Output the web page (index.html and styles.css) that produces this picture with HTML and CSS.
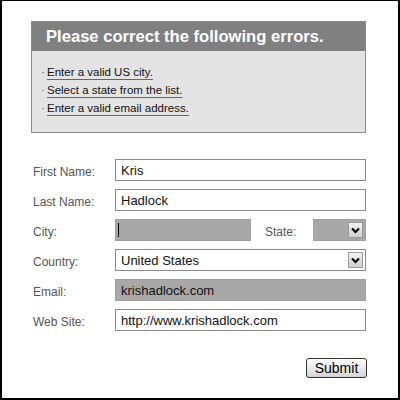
FILE: index.html
```html
<!DOCTYPE html>
<html lang="en">
<head>
    <meta charset="UTF-8">
    <title>Registration</title>
    <link rel="stylesheet" href="styles.css">
</head>
<body>
    <div class="frame">
        <div class="error-box">
            <h1 class="error-heading">Please correct the following errors.</h1>
            <ul class="error-list">
                <li><a href="#city">Enter a valid US city.</a></li>
                <li><a href="#state">Select a state from the list.</a></li>
                <li><a href="#email">Enter a valid email address.</a></li>
            </ul>
        </div>

        <form class="reg-form">
            <label class="form-label" for="first">First Name:</label>
            <input class="field" id="first" type="text" value="Kris">

            <label class="form-label" for="last">Last Name:</label>
            <input class="field" id="last" type="text" value="Hadlock">

            <label class="form-label" for="city">City:</label>
            <div class="city-row">
                <div class="field field-error city-field" id="city"><span class="caret"></span></div>
                <label class="form-label state-label" for="state">State:</label>
                <div class="select select-error state-select" id="state">
                    <span class="select-text"></span>
                    <span class="select-btn">
                        <svg width="9" height="7" viewBox="0 0 9 7"><path d="M1 1.5 L4.5 5 L8 1.5" fill="none" stroke="#000" stroke-width="2.2"/></svg>
                    </span>
                </div>
            </div>

            <label class="form-label" for="country">Country:</label>
            <div class="select" id="country">
                <span class="select-text">United States</span>
                <span class="select-btn">
                    <svg width="9" height="7" viewBox="0 0 9 7"><path d="M1 1.5 L4.5 5 L8 1.5" fill="none" stroke="#000" stroke-width="2.2"/></svg>
                </span>
            </div>

            <label class="form-label" for="email">Email:</label>
            <input class="field field-error" id="email" type="text" value="krishadlock.com">

            <label class="form-label" for="site">Web Site:</label>
            <input class="field" id="site" type="text" value="http://www.krishadlock.com">

            <div class="actions">
                <button type="submit" class="submit-btn">Submit</button>
            </div>
        </form>
    </div>
</body>
</html>
```

FILE: styles.css
```css
body {
    margin: 0;
    padding: 0;
    background: #ffffff;
    font-family: 'Liberation Sans', Arial, sans-serif;
}

.frame {
    width: 400px;
    height: 400px;
    box-sizing: border-box;
    border: 2px solid #000;
    border-top-width: 1px;
    padding: 20px 32px 0 29px;
}

.error-box {
    background: #e4e4e4;
    border: 1px solid #8a8a8a;
    height: 112px;
    box-sizing: border-box;
}

.error-heading {
    margin: 0;
    height: 29px;
    background: #808080;
    color: #ffffff;
    font-size: 16.6px;
    font-weight: bold;
    line-height: 29px;
    padding-left: 14px;
}

.error-list {
    list-style: none;
    margin: 0;
    padding: 12px 0 0 9px;
}

.error-list li {
    font-size: 11.5px;
    line-height: 18px;
    color: #555;
}

.error-list li::before {
    content: '\00B7';
    display: inline-block;
    width: 6px;
    color: #666;
}

.error-list a {
    color: #111;
    text-decoration: underline;
    text-decoration-color: #666;
    text-decoration-thickness: 1px;
    text-underline-offset: 3px;
}

.reg-form {
    display: grid;
    grid-template-columns: 82px 1fr;
    grid-auto-rows: 22px;
    row-gap: 8px;
    margin: 26px 0 0 2px;
    align-items: center;
}

.form-label {
    font-size: 12px;
    color: #555;
    padding-top: 3px;
}

.field {
    height: 22px;
    box-sizing: border-box;
    border: 1px solid #8a8a8a;
    background: #fff;
    font-family: 'Liberation Sans', Arial, sans-serif;
    font-size: 13px;
    color: #111;
    padding: 0 5px;
    margin: 0;
    outline: none;
}

.field-error {
    background: #a8a8a8;
    border-color: #a0a0a0;
}

.city-row {
    display: flex;
    align-items: center;
    height: 22px;
}

.city-field {
    width: 136px;
    position: relative;
}

.caret {
    position: absolute;
    left: 2px;
    top: 3px;
    width: 1px;
    height: 14px;
    background: #000;
}

.state-label {
    margin-left: 14px;
    width: 48px;
}

.select {
    height: 22px;
    box-sizing: border-box;
    border: 1px solid #8a8a8a;
    background: #fff;
    display: flex;
    align-items: center;
    justify-content: space-between;
    padding: 0 2px 0 5px;
    font-size: 13px;
    color: #111;
}

.select-error {
    background: #a8a8a8;
    border-color: #a0a0a0;
}

.state-select {
    width: 53px;
}

.select-btn {
    width: 15px;
    height: 16px;
    box-sizing: border-box;
    border: 1px solid #9a9a9a;
    background: linear-gradient(#f2f2f2, #cfcfcf);
    display: flex;
    align-items: center;
    justify-content: center;
}

.actions {
    grid-column: 1 / 3;
    align-self: start;
    display: flex;
    justify-content: flex-end;
    margin-top: 19px;
}

.submit-btn {
    width: 61px;
    height: 20px;
    border: 1px solid #333;
    border-radius: 3px;
    background: linear-gradient(#ffffff, #d4d4d4);
    font-family: 'Liberation Sans', Arial, sans-serif;
    font-size: 14px;
    color: #000;
    padding: 0;
    margin-right: -1px;
}
```
